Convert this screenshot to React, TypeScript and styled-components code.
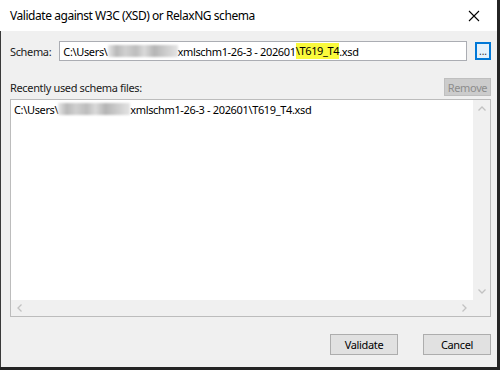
import React from "react";
import styled, { createGlobalStyle } from "styled-components";

const GlobalStyle = createGlobalStyle`
  html, body {
    margin: 0;
    padding: 0;
    background: #242424;
  }
  body {
    font-family: "Noto Sans", "Open Sans", sans-serif;
    font-size: 11px;
    letter-spacing: -0.35px;
    color: #000;
  }
`;

const recentFiles = [
  { user: "C:\\Users\\", blur: 72, rest: "xmlschm1-26-3 - 202601\\T619_T4.xsd" },
];

export default function App() {
  return (
    <>
      <GlobalStyle />
      <StyledWindow>
        <StyledTitleBar>
          <StyledTitle>Validate against W3C (XSD) or RelaxNG schema</StyledTitle>
          <StyledClose aria-label="Close">
            <svg width="12" height="12" viewBox="0 0 12 12">
              <path d="M1 1 L11 11 M11 1 L1 11" stroke="#000" strokeWidth="1.1" fill="none" />
            </svg>
          </StyledClose>
        </StyledTitleBar>

        <StyledBody>
          <StyledSchemaRow>
            <StyledLabel>Schema:</StyledLabel>
            <StyledPathInput>
              C:\Users\
              <Blurred width={70} />
              xmlschm1-26-3 - 202601
              <StyledMark>\T619_T4</StyledMark>
              .xsd
            </StyledPathInput>
            <StyledBrowse>...</StyledBrowse>
          </StyledSchemaRow>

          <StyledListHeader>
            <StyledLabel>Recently used schema files:</StyledLabel>
            <StyledButton disabled width={47} height={18}>
              Remove
            </StyledButton>
          </StyledListHeader>

          <StyledListBox>
            <StyledListItems>
              {recentFiles.map((f, i) => (
                <StyledListItem key={i}>
                  {f.user}
                  <Blurred width={f.blur} />
                  {f.rest}
                </StyledListItem>
              ))}
            </StyledListItems>
            <StyledVScroll>
              <Chevron dir="up" />
              <Chevron dir="down" />
            </StyledVScroll>
            <StyledHScroll>
              <Chevron dir="left" />
              <Chevron dir="right" />
            </StyledHScroll>
            <StyledCorner />
          </StyledListBox>

          <StyledFooter>
            <StyledButton width={68} height={21}>
              Validate
            </StyledButton>
            <StyledButton width={68} height={21}>
              Cancel
            </StyledButton>
          </StyledFooter>
        </StyledBody>
      </StyledWindow>
    </>
  );
}

const Chevron = ({ dir }: { dir: "up" | "down" | "left" | "right" }) => {
  const paths = {
    up: "M1.5 6.5 L5 3 L8.5 6.5",
    down: "M1.5 3.5 L5 7 L8.5 3.5",
    left: "M6.5 1.5 L3 5 L6.5 8.5",
    right: "M3.5 1.5 L7 5 L3.5 8.5",
  };
  return (
    <StyledArrow>
      <svg width="10" height="10" viewBox="0 0 10 10">
        <path d={paths[dir]} stroke="#c2c2c2" strokeWidth="1.3" fill="none" />
      </svg>
    </StyledArrow>
  );
};

const StyledWindow = styled.div`
  width: 497px;
  height: 367px;
  display: flex;
  flex-direction: column;
`;

const StyledTitleBar = styled.div`
  height: 31px;
  background: #fff;
  display: flex;
  align-items: center;
  justify-content: space-between;
  padding-left: 10px;
`;

const StyledTitle = styled.span`
  font-size: 12px;
  letter-spacing: -0.45px;
  color: #000;
  padding-bottom: 1px;
`;

const StyledClose = styled.div`
  width: 46px;
  height: 31px;
  display: flex;
  align-items: center;
  justify-content: center;
`;

const StyledBody = styled.div`
  flex: 1;
  background: #f0f0f0;
  border-left: 1px solid #3a3a3a;
  padding: 10px 6px 0 9px;
  display: flex;
  flex-direction: column;
`;

const StyledSchemaRow = styled.div`
  display: flex;
  align-items: center;
  height: 20px;
`;

const StyledLabel = styled.span`
  color: #1a1a1a;
  white-space: nowrap;
`;

const StyledPathInput = styled.div`
  margin-left: 8px;
  width: 409px;
  height: 20px;
  box-sizing: border-box;
  border: 1px solid #abadb3;
  background: #fff;
  padding-left: 3px;
  display: flex;
  align-items: center;
  white-space: pre;
`;

const StyledMark = styled.span`
  background: #fafa3c;
  line-height: 16px;
`;

const Blurred = styled.span<{ width: number }>`
  display: inline-block;
  width: ${({ width }) => width}px;
  height: 12px;
  filter: blur(1.2px);
  background: linear-gradient(
    90deg,
    #e8e8e8 0%,
    #b9b9b9 12%,
    #d0d0d0 25%,
    #bdbdbd 40%,
    #dadada 52%,
    #b5b5b5 66%,
    #c9c9c9 80%,
    #e4e4e4 100%
  );
`;

const StyledBrowse = styled.div`
  margin-left: 8px;
  width: 16px;
  height: 18px;
  box-sizing: border-box;
  border: 2px solid #0078d7;
  background: #e5f1fb;
  color: #333;
  font-size: 10px;
  letter-spacing: 0;
  display: flex;
  align-items: flex-end;
  justify-content: center;
  line-height: 10px;
  padding-bottom: 2px;
`;

const StyledListHeader = styled.div`
  margin-top: 17px;
  display: flex;
  align-items: center;
  justify-content: space-between;
`;

const StyledButton = styled.button<{ width: number; height: number }>`
  width: ${({ width }) => width}px;
  height: ${({ height }) => height}px;
  box-sizing: border-box;
  border: 1px solid #adadad;
  background: #e1e1e1;
  font-family: inherit;
  font-size: 11px;
  letter-spacing: -0.35px;
  color: #000;
  padding: 0;
  &:disabled {
    background: #cccccc;
    border-color: #bfbfbf;
    color: #8d8d8d;
  }
`;

const StyledListBox = styled.div`
  margin-top: 3px;
  height: 218px;
  box-sizing: border-box;
  border: 1px solid #bcbcbc;
  background: #fff;
  display: grid;
  grid-template-columns: 1fr 17px;
  grid-template-rows: 1fr 16px;
`;

const StyledListItems = styled.div`
  padding: 2px 3px;
`;

const StyledListItem = styled.div`
  display: flex;
  align-items: center;
  white-space: pre;
  height: 14px;
`;

const StyledVScroll = styled.div`
  background: #f0f0f0;
  display: flex;
  flex-direction: column;
  justify-content: space-between;
  align-items: center;
  padding: 4px 0;
`;

const StyledHScroll = styled.div`
  background: #f0f0f0;
  display: flex;
  justify-content: space-between;
  align-items: center;
  padding: 0 4px;
`;

const StyledCorner = styled.div`
  background: #f0f0f0;
`;

const StyledArrow = styled.div`
  width: 10px;
  height: 10px;
  display: flex;
`;

const StyledFooter = styled.div`
  margin-top: 17px;
  display: flex;
  justify-content: flex-end;
  gap: 25px;
`;
